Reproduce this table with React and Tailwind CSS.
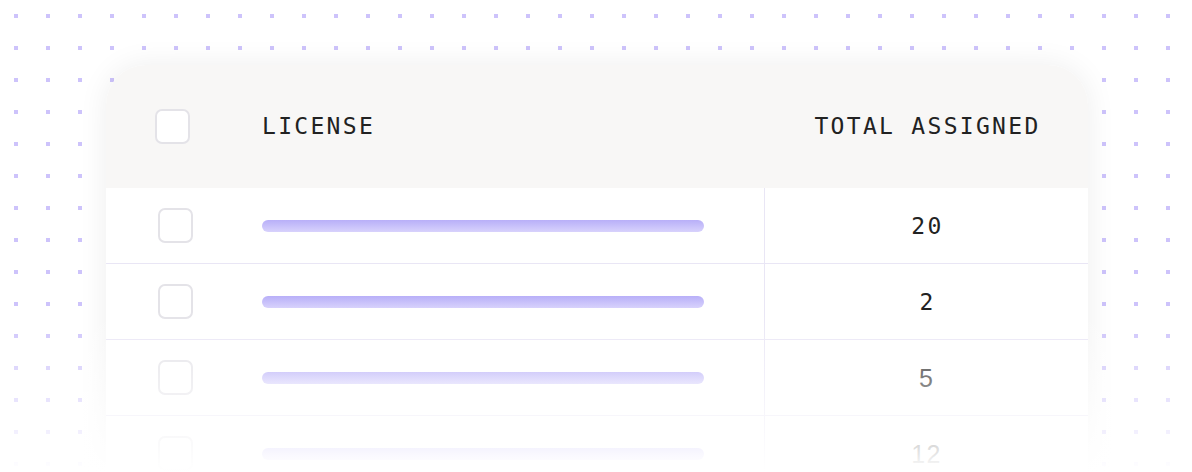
import React from 'react';

// rows of the license table (values only, bars are placeholders)
const ROWS = [
  { id: 1, total: '20', mono: true },
  { id: 2, total: '2', mono: true },
  { id: 3, total: '5', mono: false },
  { id: 4, total: '12', mono: false },
];

const Checkbox = () => (
  <div className="w-[35px] h-[35px] rounded-[7px] border-2 border-[#e4e3e8] bg-white" />
);

const DotGrid = () => (
  <svg className="absolute inset-0 w-full h-full" aria-hidden="true">
    <defs>
      <pattern id="dots" x="0" y="0" width="32" height="32" patternUnits="userSpaceOnUse">
        <rect x="14" y="14" width="4" height="4" fill="#cdc3fb" />
      </pattern>
    </defs>
    <rect width="100%" height="100%" fill="url(#dots)" />
  </svg>
);

export default function App() {
  return (
    <div className="relative w-[1192px] h-[472px] overflow-hidden bg-white font-['DejaVu_Sans_Mono',monospace]">
      <DotGrid />

      <div className="relative ml-[106px] mt-[65px] w-[982px] rounded-t-[40px] overflow-hidden bg-white shadow-[0_0_30px_rgba(0,0,0,0.07)]">
        {/* header */}
        <div className="grid grid-cols-[659px_1fr] h-[123px] bg-[#f8f7f6] items-center">
          <div className="flex items-center">
            <div className="pl-[49px] w-[156px]">
              <Checkbox />
            </div>
            <span className="text-[23px] tracking-[0.1em] text-[#222] leading-none">LICENSE</span>
          </div>
          <div className="text-center text-[23px] tracking-[0.1em] text-[#222] leading-none pl-[2px]">
            TOTAL ASSIGNED
          </div>
        </div>

        {/* rows */}
        {ROWS.map((r) => (
          <div key={r.id} className="grid grid-cols-[659px_1fr] h-[76px] border-b border-[#e9e6f5]">
            <div className="flex items-center border-r border-[#e9e6f5]">
              <div className="pl-[52px] w-[156px]">
                <Checkbox />
              </div>
              <div className="w-[442px] h-[12px] rounded-full bg-gradient-to-b from-[#b8aff8] to-[#d8d2fc]" />
            </div>
            <div
              className={
                r.mono
                  ? 'flex items-center justify-center pt-[2px] text-[23px] tracking-[0.1em] text-[#222] pl-[2px]'
                  : "flex items-center justify-center pt-[2px] text-[25px] tracking-[0.05em] text-[#222] font-['Liberation_Sans',sans-serif]"
              }
            >
              {r.total}
            </div>
          </div>
        ))}
      </div>

      {/* bottom fade */}
      <div className="absolute left-0 right-0 bottom-0 h-[160px] bg-gradient-to-b from-white/0 to-white" />
    </div>
  );
}
